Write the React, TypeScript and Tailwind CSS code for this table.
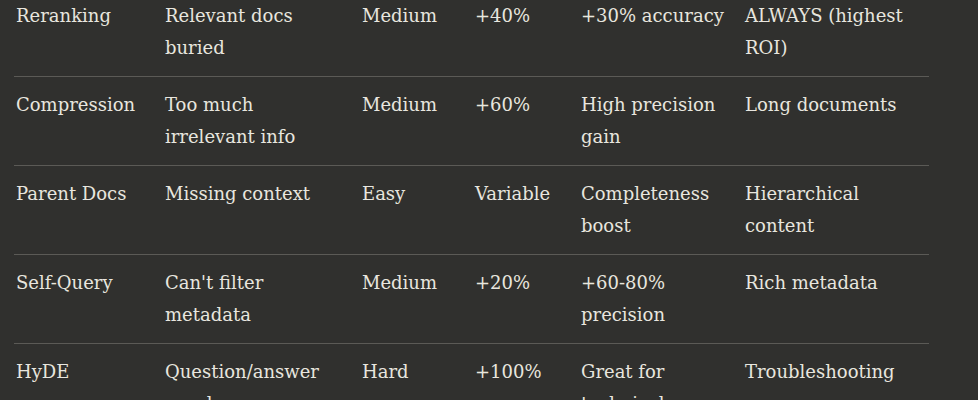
import React from "react";

type Row = {
  technique: string;
  problem: string[];
  effort: string;
  cost: string;
  gain: string[];
  useWhen: string[];
};

const rows: Row[] = [
  {
    technique: "Reranking",
    problem: ["Relevant docs", "buried"],
    effort: "Medium",
    cost: "+40%",
    gain: ["+30% accuracy"],
    useWhen: ["ALWAYS (highest", "ROI)"],
  },
  {
    technique: "Compression",
    problem: ["Too much", "irrelevant info"],
    effort: "Medium",
    cost: "+60%",
    gain: ["High precision", "gain"],
    useWhen: ["Long documents"],
  },
  {
    technique: "Parent Docs",
    problem: ["Missing context"],
    effort: "Easy",
    cost: "Variable",
    gain: ["Completeness", "boost"],
    useWhen: ["Hierarchical", "content"],
  },
  {
    technique: "Self-Query",
    problem: ["Can't filter", "metadata"],
    effort: "Medium",
    cost: "+20%",
    gain: ["+60-80%", "precision"],
    useWhen: ["Rich metadata"],
  },
  {
    technique: "HyDE",
    problem: ["Question/answer", "vocab gap"],
    effort: "Hard",
    cost: "+100%",
    gain: ["Great for", "technical", "queries"],
    useWhen: ["Troubleshooting"],
  },
];

function Lines({ lines }: { lines: string[] }) {
  return (
    <div className="pl-[2px] whitespace-nowrap">
      {lines.map((l, i) => (
        <div key={i}>{l}</div>
      ))}
    </div>
  );
}

export default function App() {
  return (
    <div
      className="h-[400px] w-full overflow-hidden bg-[#30302e] text-[#e8e6df] text-[18px] leading-[32px]"
      style={{ fontFamily: '"DejaVu Serif", serif' }}
    >
      <div className="-mt-[12px] ml-[14px] w-[915px]">
        {rows.map((r) => (
          <div
            key={r.technique}
            className="grid grid-cols-[149px_197px_113px_106px_164px_186px] border-b border-[#5b5a56] py-3 min-h-[89px]"
          >
            <Lines lines={[r.technique]} />
            <Lines lines={r.problem} />
            <Lines lines={[r.effort]} />
            <Lines lines={[r.cost]} />
            <Lines lines={r.gain} />
            <Lines lines={r.useWhen} />
          </div>
        ))}
      </div>
    </div>
  );
}
